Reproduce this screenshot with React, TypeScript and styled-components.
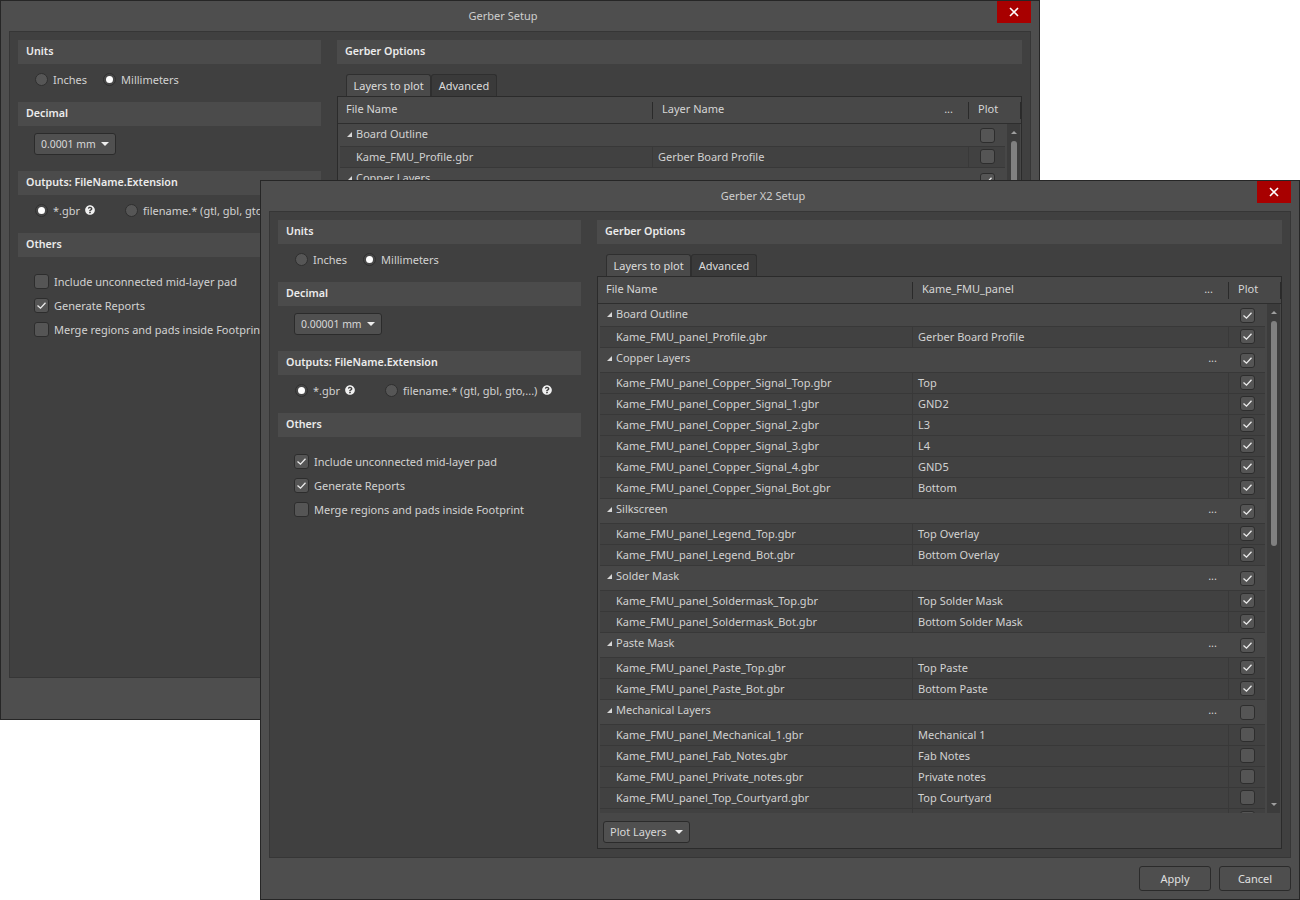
import { ReactNode } from 'react'
import styled, { createGlobalStyle } from 'styled-components'
import { FaQuestionCircle } from 'react-icons/fa'

const GlobalStyle = createGlobalStyle`
  html, body {
    margin: 0;
    padding: 0;
    background: #fff;
  }
  #root {
    position: relative;
    width: 1300px;
    height: 900px;
    overflow: hidden;
    font-family: "Noto Sans", "Open Sans", sans-serif;
    font-size: 11px;
    color: #d2d2d2;
  }
`

const Window = styled.section<{ $x: number; $y: number }>`
  position: absolute;
  left: ${({ $x }) => $x}px;
  top: ${({ $y }) => $y}px;
  width: 1040px;
  height: 720px;
  box-sizing: border-box;
  border: 1px solid #262626;
  background: #4e4e4e;
  display: flex;
  flex-direction: column;
`

const TitleBar = styled.header`
  height: 30px;
  flex: none;
  display: flex;
  align-items: flex-start;
  padding-right: 8px;
`

const Title = styled.h1`
  flex: 1;
  margin: 0;
  padding-left: 8px;
  font-size: 11px;
  font-weight: 400;
  line-height: 30px;
  text-align: center;
  color: #cfcfcf;
`

const CloseButton = styled.button`
  width: 34px;
  height: 22px;
  padding: 0;
  border: 0;
  background: #a80000;
  display: flex;
  align-items: center;
  justify-content: center;
`

const Body = styled.div`
  flex: 1;
  min-height: 0;
  margin: 0 8px;
  padding: 8px;
  background: #404040;
  border: 1px solid #363636;
  display: grid;
  grid-template-columns: 303px 1fr;
  column-gap: 16px;
`

const Column = styled.div`
  display: flex;
  flex-direction: column;
  min-height: 0;
  min-width: 0;
`

const SectionHeader = styled.h2`
  flex: none;
  height: 24px;
  margin: 0;
  padding: 0 8px;
  background: #4b4b4b;
  font-size: 10.7px;
  font-weight: 600;
  line-height: 22px;
  color: #ececec;
`

const OptionRow = styled.div`
  height: 38px;
  box-sizing: border-box;
  padding: 0 0 8px 17px;
  display: flex;
  align-items: center;
`

const RadioLabel = styled.label<{ $gap?: number }>`
  display: flex;
  align-items: center;
  margin-right: ${({ $gap }) => $gap ?? 16}px;
`

const RadioMark = styled.span<{ $on?: boolean }>`
  width: 13px;
  height: 13px;
  box-sizing: border-box;
  margin-right: 5px;
  border-radius: 50%;
  border: 1px solid #2f2f2f;
  background: ${({ $on }) => ($on ? '#474747' : '#565656')};
  display: flex;
  align-items: center;
  justify-content: center;
  &::after {
    content: '';
    width: 7px;
    height: 7px;
    border-radius: 50%;
    background: #fff;
    display: ${({ $on }) => ($on ? 'block' : 'none')};
  }
`

const Help = styled(FaQuestionCircle)`
  width: 10px;
  height: 10px;
  margin-left: 5px;
  color: #f0f0f0;
`

const DropdownRow = styled.div`
  height: 45px;
  padding: 7px 0 0 16px;
  box-sizing: border-box;
`

const DropButton = styled.button<{ $width: number }>`
  width: ${({ $width }) => $width}px;
  height: 22px;
  padding: 0 6px 1px;
  box-sizing: border-box;
  border: 1px solid #2b2b2b;
  border-radius: 3px;
  background: #505050;
  color: #d8d8d8;
  font: inherit;
  display: flex;
  align-items: center;
  justify-content: space-between;
`

const DecimalButton = styled(DropButton)`
  font-size: 10.4px;
`

const Caret = styled.span`
  width: 0;
  height: 0;
  border-left: 4px solid transparent;
  border-right: 4px solid transparent;
  border-top: 4px solid #eee;
`

const CheckList = styled.div`
  padding: 12px 0 0 16px;
  display: flex;
  flex-direction: column;
`

const CheckRow = styled.label`
  height: 24px;
  display: flex;
  align-items: center;
  gap: 5px;
`

const Box = styled.span`
  width: 15px;
  height: 15px;
  box-sizing: border-box;
  flex: none;
  border: 1px solid #2d2d2d;
  border-radius: 3px;
  background: #555;
  display: flex;
  align-items: center;
  justify-content: center;
`

const Tabs = styled.div`
  flex: none;
  height: 22px;
  margin-top: 10px;
  padding-left: 9px;
  display: flex;
`

const Tab = styled.div<{ $active?: boolean }>`
  padding: 0 6.5px;
  box-sizing: border-box;
  border: 1px solid #2f2f2f;
  border-bottom: 0;
  border-radius: 3px 3px 0 0;
  background: ${({ $active }) => ($active ? '#4a4a4a' : '#3a3a3a')};
  line-height: 22px;
  color: #dcdcdc;
`

const Table = styled.div`
  flex: 1;
  min-height: 0;
  box-sizing: border-box;
  border: 1px solid #2b2b2b;
  background: #474747;
  display: flex;
  flex-direction: column;
`

const TableHead = styled.div`
  flex: none;
  height: 26px;
  border-bottom: 1px solid #2e2e2e;
  background: #484848;
  display: grid;
  grid-template-columns: 315px 316px 1fr;
  align-items: center;
`

const HeadCell = styled.div`
  height: 17px;
  padding: 0 8px;
  line-height: 13px;
  display: flex;
  justify-content: space-between;
  border-right: 1px solid #2a2a2a;
  color: #d6d6d6;
  & + & {
    padding-left: 9px;
  }
`

const TableMain = styled.div`
  flex: 1;
  min-height: 0;
  padding: 0 1px 0 2px;
  display: flex;
  gap: 2px;
`

const RowList = styled.div`
  flex: 1;
  min-width: 0;
  overflow: hidden;
`

const Row = styled.div<{ $height: number; $group?: boolean }>`
  height: ${({ $height }) => $height}px;
  box-sizing: border-box;
  border-bottom: 1px solid #383838;
  background: ${({ $group }) => ($group ? '#474747' : '#414141')};
  display: grid;
  grid-template-columns: 313px 316px 1fr;
  overflow: hidden;
`

const Cell = styled.div<{ $line?: boolean }>`
  height: 100%;
  padding: 0 5px;
  box-sizing: border-box;
  line-height: 19.5px;
  white-space: nowrap;
  display: flex;
  justify-content: space-between;
  border-right: ${({ $line }) => ($line ? '1px solid #393939' : '0')};
`

const NameCell = styled(Cell)<{ $group?: boolean }>`
  padding-left: 16px;
  position: relative;
  ${({ $group }) =>
    $group &&
    `
    &::before {
      content: '';
      position: absolute;
      left: 7px;
      top: 8px;
      border-left: 5px solid transparent;
      border-bottom: 5px solid #d8d8d8;
    }
  `}
`

const PlotCell = styled.div<{ $top: number }>`
  padding-top: ${({ $top }) => $top}px;
  display: flex;
  justify-content: center;
`

const Dots = styled.span`
  margin-left: auto;
  margin-right: 7px;
`

const Scrollbar = styled.div`
  flex: none;
  width: 13px;
  background: #3c3c3c;
  display: flex;
  flex-direction: column;
  align-items: center;
`

const ScrollArrow = styled.span<{ $down?: boolean }>`
  flex: none;
  margin: ${({ $down }) => ($down ? 'auto 0 7px' : '7px 0 0')};
  border-left: 3px solid transparent;
  border-right: 3px solid transparent;
  ${({ $down }) => ($down ? 'border-top' : 'border-bottom')}: 3px solid #a0a0a0;
`

const ScrollThumb = styled.span`
  flex: none;
  width: 6px;
  height: 225px;
  margin-top: 7px;
  border-radius: 3px;
  background: #808080;
`

const TableFooter = styled.div`
  flex: none;
  height: 35px;
  padding: 8px 0 0 5px;
  box-sizing: border-box;
`

const Footer = styled.footer`
  flex: none;
  height: 41px;
  padding: 8px 8px 0 0;
  box-sizing: border-box;
  display: flex;
  justify-content: flex-end;
  gap: 8px;
`

const ActionButton = styled.button`
  width: 72px;
  height: 25px;
  padding: 0;
  border: 1px solid #2b2b2b;
  border-radius: 3px;
  background: #4e4e4e;
  color: #e0e0e0;
  font: inherit;
`

type LayerRow = {
  name: string
  layer?: string
  checked?: boolean
  group?: boolean
  first?: boolean
  dots?: boolean
}

const file = (name: string, layer: string, checked = true): LayerRow => ({
  name,
  layer,
  checked,
})
const group = (name: string, checked = true): LayerRow => ({
  name,
  checked,
  group: true,
  dots: true,
})

const p = 'Kame_FMU_panel_'

const x2Rows: LayerRow[] = [
  { name: 'Board Outline', checked: true, group: true, first: true },
  file(`${p}Profile.gbr`, 'Gerber Board Profile'),
  group('Copper Layers'),
  file(`${p}Copper_Signal_Top.gbr`, 'Top'),
  file(`${p}Copper_Signal_1.gbr`, 'GND2'),
  file(`${p}Copper_Signal_2.gbr`, 'L3'),
  file(`${p}Copper_Signal_3.gbr`, 'L4'),
  file(`${p}Copper_Signal_4.gbr`, 'GND5'),
  file(`${p}Copper_Signal_Bot.gbr`, 'Bottom'),
  group('Silkscreen'),
  file(`${p}Legend_Top.gbr`, 'Top Overlay'),
  file(`${p}Legend_Bot.gbr`, 'Bottom Overlay'),
  group('Solder Mask'),
  file(`${p}Soldermask_Top.gbr`, 'Top Solder Mask'),
  file(`${p}Soldermask_Bot.gbr`, 'Bottom Solder Mask'),
  group('Paste Mask'),
  file(`${p}Paste_Top.gbr`, 'Top Paste'),
  file(`${p}Paste_Bot.gbr`, 'Bottom Paste'),
  group('Mechanical Layers', false),
  file(`${p}Mechanical_1.gbr`, 'Mechanical 1', false),
  file(`${p}Fab_Notes.gbr`, 'Fab Notes', false),
  file(`${p}Private_notes.gbr`, 'Private notes', false),
  file(`${p}Top_Courtyard.gbr`, 'Top Courtyard', false),
  // next row peeks in below the fold, only its checkbox top shows
  file('', '', false),
]

const gerberRows: LayerRow[] = [
  { name: 'Board Outline', checked: false, group: true, first: true },
  file('Kame_FMU_Profile.gbr', 'Gerber Board Profile', false),
  group('Copper Layers'),
]

const CheckBox = ({ checked }: { checked?: boolean }) => (
  <Box>
    {checked && (
      <svg width="11" height="11" viewBox="0 0 11 11" fill="none">
        <path d="M1.5 5.5 L4.5 8.2 L9.5 2.8" stroke="#ececec" strokeWidth="1.3" />
      </svg>
    )}
  </Box>
)

const Radio = ({
  on,
  gap,
  children,
}: {
  on?: boolean
  gap?: number
  children: ReactNode
}) => (
  <RadioLabel $gap={gap}>
    <RadioMark $on={on} />
    {children}
  </RadioLabel>
)

// box offset inside a row differs between the first group, other groups and files
const boxTop = (row: LayerRow) => (row.group ? (row.first ? 4 : 5) : 2)

interface DialogProps {
  x: number
  y: number
  title: string
  decimal: string
  decimalWidth: number
  layerHead: string
  includeMidLayer?: boolean
  rows: LayerRow[]
}

const GerberDialog = ({
  x,
  y,
  title,
  decimal,
  decimalWidth,
  layerHead,
  includeMidLayer,
  rows,
}: DialogProps) => (
  <Window $x={x} $y={y}>
    <TitleBar>
      <Title>{title}</Title>
      <CloseButton aria-label="Close">
        <svg width="10" height="10" viewBox="0 0 10 10">
          <path d="M1 1 L9 9 M9 1 L1 9" stroke="#fff" strokeWidth="1.6" />
        </svg>
      </CloseButton>
    </TitleBar>
    <Body>
      <Column>
        <SectionHeader>Units</SectionHeader>
        <OptionRow>
          <Radio>Inches</Radio>
          <Radio on>Millimeters</Radio>
        </OptionRow>
        <SectionHeader>Decimal</SectionHeader>
        <DropdownRow>
          <DecimalButton $width={decimalWidth}>
            {decimal}
            <Caret />
          </DecimalButton>
        </DropdownRow>
        <SectionHeader>Outputs: FileName.Extension</SectionHeader>
        <OptionRow>
          <Radio on gap={30}>
            *.gbr <Help />
          </Radio>
          <Radio>
            filename.* (gtl, gbl, gto,...) <Help />
          </Radio>
        </OptionRow>
        <SectionHeader>Others</SectionHeader>
        <CheckList>
          <CheckRow>
            <CheckBox checked={includeMidLayer} />
            Include unconnected mid-layer pad
          </CheckRow>
          <CheckRow>
            <CheckBox checked />
            Generate Reports
          </CheckRow>
          <CheckRow>
            <CheckBox />
            Merge regions and pads inside Footprint
          </CheckRow>
        </CheckList>
      </Column>
      <Column>
        <SectionHeader>Gerber Options</SectionHeader>
        <Tabs>
          <Tab $active>Layers to plot</Tab>
          <Tab>Advanced</Tab>
        </Tabs>
        <Table>
          <TableHead>
            <HeadCell>File Name</HeadCell>
            <HeadCell>
              {layerHead}
              <Dots>...</Dots>
            </HeadCell>
            <HeadCell>Plot</HeadCell>
          </TableHead>
          <TableMain>
            <RowList>
              {rows.map((row) => (
                <Row
                  key={row.name}
                  $group={row.group}
                  $height={row.group ? (row.first ? 23 : 25) : 21}
                >
                  <NameCell $group={row.group} $line={!row.group}>
                    {row.name}
                  </NameCell>
                  <Cell $line={!row.group}>
                    {row.layer}
                    {row.dots && <Dots>...</Dots>}
                  </Cell>
                  <PlotCell $top={boxTop(row)}>
                    <CheckBox checked={row.checked} />
                  </PlotCell>
                </Row>
              ))}
            </RowList>
            <Scrollbar>
              <ScrollArrow />
              <ScrollThumb />
              <ScrollArrow $down />
            </Scrollbar>
          </TableMain>
          <TableFooter>
            <DropButton $width={87}>
              Plot Layers
              <Caret />
            </DropButton>
          </TableFooter>
        </Table>
      </Column>
    </Body>
    <Footer>
      <ActionButton>Apply</ActionButton>
      <ActionButton>Cancel</ActionButton>
    </Footer>
  </Window>
)

export default function App() {
  return (
    <>
      <GlobalStyle />
      <GerberDialog
        x={0}
        y={0}
        title="Gerber Setup"
        decimal="0.0001 mm"
        decimalWidth={82}
        layerHead="Layer Name"
        rows={gerberRows}
      />
      <GerberDialog
        x={260}
        y={180}
        title="Gerber X2 Setup"
        decimal="0.00001 mm"
        decimalWidth={88}
        layerHead="Kame_FMU_panel"
        includeMidLayer
        rows={x2Rows}
      />
    </>
  )
}
